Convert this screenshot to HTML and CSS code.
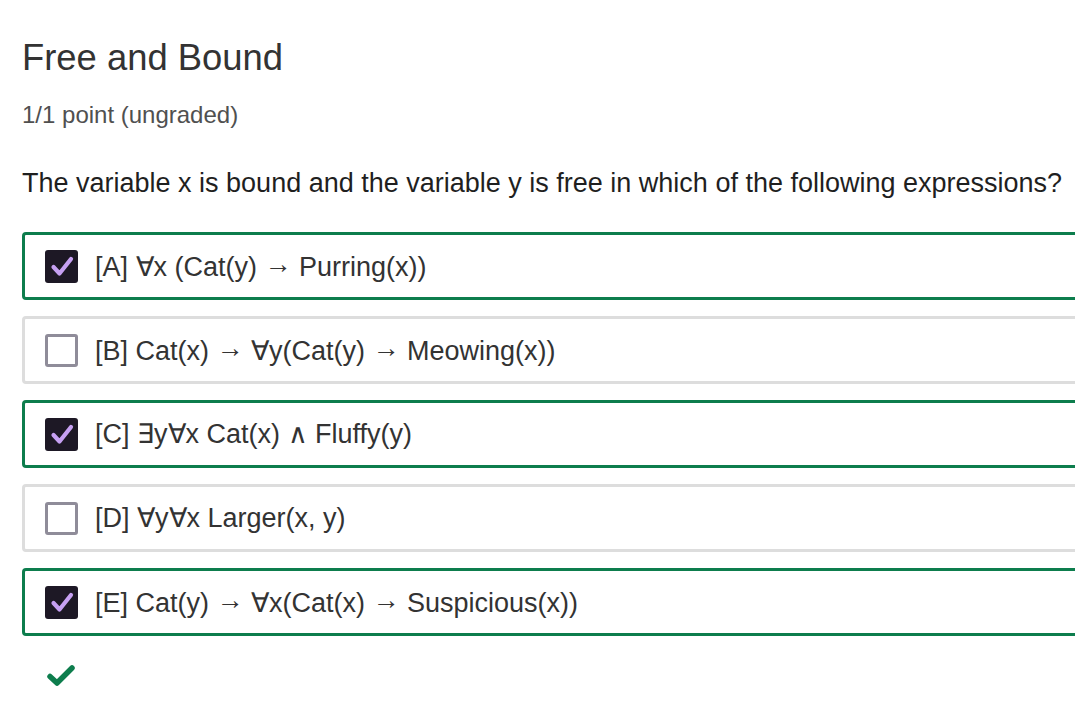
FILE: index.html
```html
<!DOCTYPE html>
<html lang="en">
<head>
<meta charset="utf-8">
<title>Free and Bound</title>
<link rel="stylesheet" href="styles.css">
</head>
<body>
<main class="problem">
  <h2 class="title">Free and Bound</h2>
  <p class="points">1/1 point (ungraded)</p>
  <p class="question">The variable x is bound and the variable y is free in which of the following expressions?</p>
  <div class="options">
    <label class="option selected">
      <span class="box checked"><svg viewBox="0 0 33 33" width="33" height="33"><path d="M8.5 17 L14.5 23.5 L26 9" fill="none" stroke="#c6a0f2" stroke-width="4.2" stroke-linecap="round" stroke-linejoin="round"/></svg></span>
      <span class="label">[A] ∀x (Cat(y) <span class="arrow">→</span> Purring(x))</span>
    </label>
    <label class="option">
      <span class="box"></span>
      <span class="label">[B] Cat(x) <span class="arrow">→</span> ∀y(Cat(y) <span class="arrow">→</span> Meowing(x))</span>
    </label>
    <label class="option selected">
      <span class="box checked"><svg viewBox="0 0 33 33" width="33" height="33"><path d="M8.5 17 L14.5 23.5 L26 9" fill="none" stroke="#c6a0f2" stroke-width="4.2" stroke-linecap="round" stroke-linejoin="round"/></svg></span>
      <span class="label">[C] ∃y∀x Cat(x) ∧ Fluffy(y)</span>
    </label>
    <label class="option">
      <span class="box"></span>
      <span class="label">[D] ∀y∀x Larger(x, y)</span>
    </label>
    <label class="option selected">
      <span class="box checked"><svg viewBox="0 0 33 33" width="33" height="33"><path d="M8.5 17 L14.5 23.5 L26 9" fill="none" stroke="#c6a0f2" stroke-width="4.2" stroke-linecap="round" stroke-linejoin="round"/></svg></span>
      <span class="label">[E] Cat(y) <span class="arrow">→</span> ∀x(Cat(x) <span class="arrow">→</span> Suspicious(x))</span>
    </label>
  </div>
  <div class="status">
    <svg viewBox="0 0 28 23" width="28" height="23"><path d="M3 12.5 L10 19 L25 4" fill="none" stroke="#0d7d4d" stroke-width="5.5" stroke-linecap="round" stroke-linejoin="round"/></svg>
  </div>
</main>
</body>
</html>
```
FILE: styles.css
```css
html, body {
  margin: 0;
  padding: 0;
  background: #ffffff;
  overflow: hidden;
}
body {
  font-family: "Liberation Sans", Arial, sans-serif;
  color: #333333;
}
.problem {
  padding: 36px 0 0 22px;
}
.title {
  margin: 0;
  font-size: 36.4px;
  font-weight: 400;
  line-height: 44px;
  color: #333333;
}
.points {
  margin: 20px 0 0;
  font-size: 24px;
  line-height: 30px;
  color: #505050;
}
.question {
  margin: 36px 0 0;
  font-size: 27px;
  line-height: 34px;
  color: #1f1f1f;
  white-space: nowrap;
}
.options {
  margin-top: 32px;
  display: flex;
  flex-direction: column;
  gap: 16px;
  width: 1100px;
}
.option {
  display: flex;
  align-items: center;
  gap: 17px;
  height: 68px;
  box-sizing: border-box;
  padding: 0 20px;
  border: 3px solid #dddddd;
  border-radius: 4px;
  font-size: 27px;
  color: #333333;
}
.option.selected {
  border-color: #0d7d4d;
}
.box {
  flex: none;
  width: 33px;
  height: 33px;
  box-sizing: border-box;
  border: 3px solid #8f8c99;
  border-radius: 3px;
  background: #ffffff;
}
.box.checked {
  border: none;
  background: #1d1825;
}
.box svg {
  display: block;
}
.label {
  white-space: nowrap;
}
.arrow {
  vertical-align: 3px;
}
.status {
  padding: 28px 0 0 25px;
}
.status svg {
  display: block;
}
```
